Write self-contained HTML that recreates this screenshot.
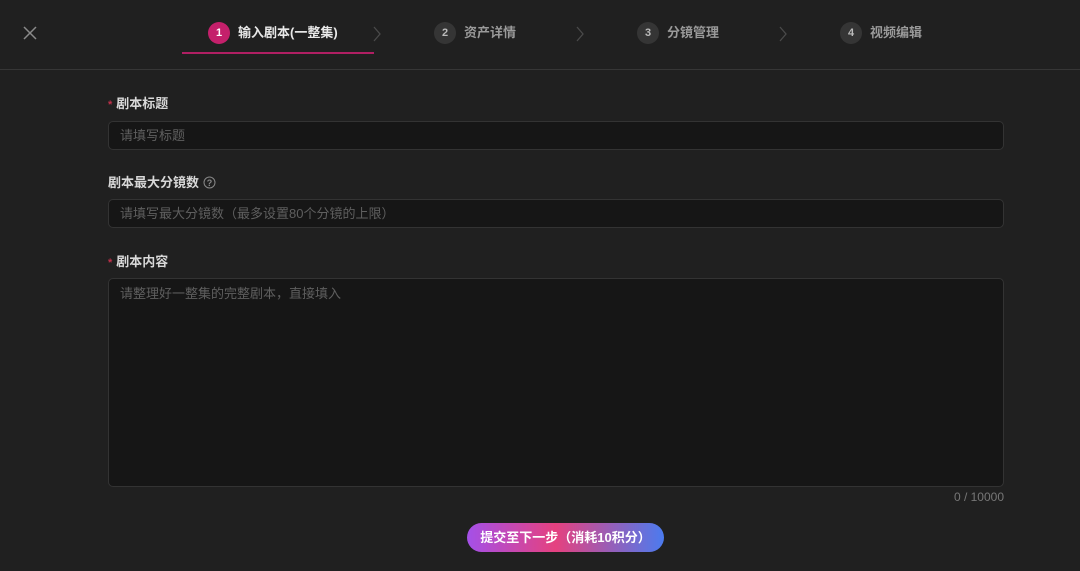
<!DOCTYPE html>
<html><head><meta charset="utf-8"><style>
*{margin:0;padding:0;box-sizing:border-box}
body{width:1080px;height:571px;background:#202020;font-family:"Liberation Sans","Noto Sans CJK SC",sans-serif;position:relative;overflow:hidden;color:#ddd}
.a{position:absolute}
.hd{left:0;top:69px;width:1080px;height:1px;background:#363636}
.c{width:22px;height:22px;border-radius:50%;background:#353535;color:#bbb;font-size:11px;font-weight:bold;text-align:center;line-height:22px;top:22px}
.st{top:24px;font-size:13px;font-weight:bold;color:#9a9a9a;line-height:18px}
.lab{font-size:13px;font-weight:bold;color:#d8d8d8;line-height:16px;left:108px}
.star{color:#c0304a;font-size:11px;margin-right:4px}
.in{left:108px;width:896px;background:#161616;border:1px solid #333;border-radius:5px;font-size:13px;color:#5f5f5f;padding:0 11px;line-height:28px}
</style></head><body>
<svg class="a" style="left:23px;top:26px" width="14" height="14" viewBox="0 0 14 14"><path d="M1 1L13 13M13 1L1 13" stroke="#8a8a8a" stroke-width="1.5"/></svg>
<div class="a c" style="left:208px;background:#c4206b;color:#fff">1</div>
<div class="a st" style="left:238px;color:#e8e8e8">输入剧本(一整集)</div>
<div class="a" style="left:182px;top:52px;width:192px;height:2px;background:#b01f63"></div>
<div class="a c" style="left:434px">2</div><div class="a st" style="left:464px">资产详情</div>
<div class="a c" style="left:637px">3</div><div class="a st" style="left:667px">分镜管理</div>
<div class="a c" style="left:840px">4</div><div class="a st" style="left:870px">视频编辑</div>
<svg class="a" style="left:372px;top:26px" width="10" height="16"><path d="M2 1L8 8L2 15" stroke="#4a4a4a" stroke-width="1.3" fill="none"/></svg>
<svg class="a" style="left:575px;top:26px" width="10" height="16"><path d="M2 1L8 8L2 15" stroke="#4a4a4a" stroke-width="1.3" fill="none"/></svg>
<svg class="a" style="left:778px;top:26px" width="10" height="16"><path d="M2 1L8 8L2 15" stroke="#4a4a4a" stroke-width="1.3" fill="none"/></svg>
<div class="a hd"></div>
<div class="a lab" style="top:96px"><span class="star">*</span>剧本标题</div>
<div class="a in" style="top:121px;height:29px">请填写标题</div>
<div class="a lab" style="top:175px">剧本最大分镜数 <svg style="vertical-align:-2px" width="13" height="13"><circle cx="6.5" cy="6.5" r="5.5" stroke="#888" fill="none"/><text x="6.5" y="10" font-size="9" fill="#888" text-anchor="middle" font-family="Liberation Sans">?</text></svg></div>
<div class="a in" style="top:199px;height:29px">请填写最大分镜数（最多设置80个分镜的上限）</div>
<div class="a lab" style="top:254px"><span class="star">*</span>剧本内容</div>
<div class="a in" style="top:278px;height:209px;padding-top:1px">请整理好一整集的完整剧本，直接填入</div>
<div class="a" style="right:76px;top:490px;font-size:12px;color:#777">0 / 10000</div>
<div class="a" style="left:467px;top:523px;width:197px;height:29px;border-radius:15px;background:linear-gradient(90deg,#a450e8,#e5417f 45%,#4b7bef);color:#fff;font-size:13px;font-weight:bold;text-align:center;line-height:29px">提交至下一步（消耗10积分）</div>
</body></html>
